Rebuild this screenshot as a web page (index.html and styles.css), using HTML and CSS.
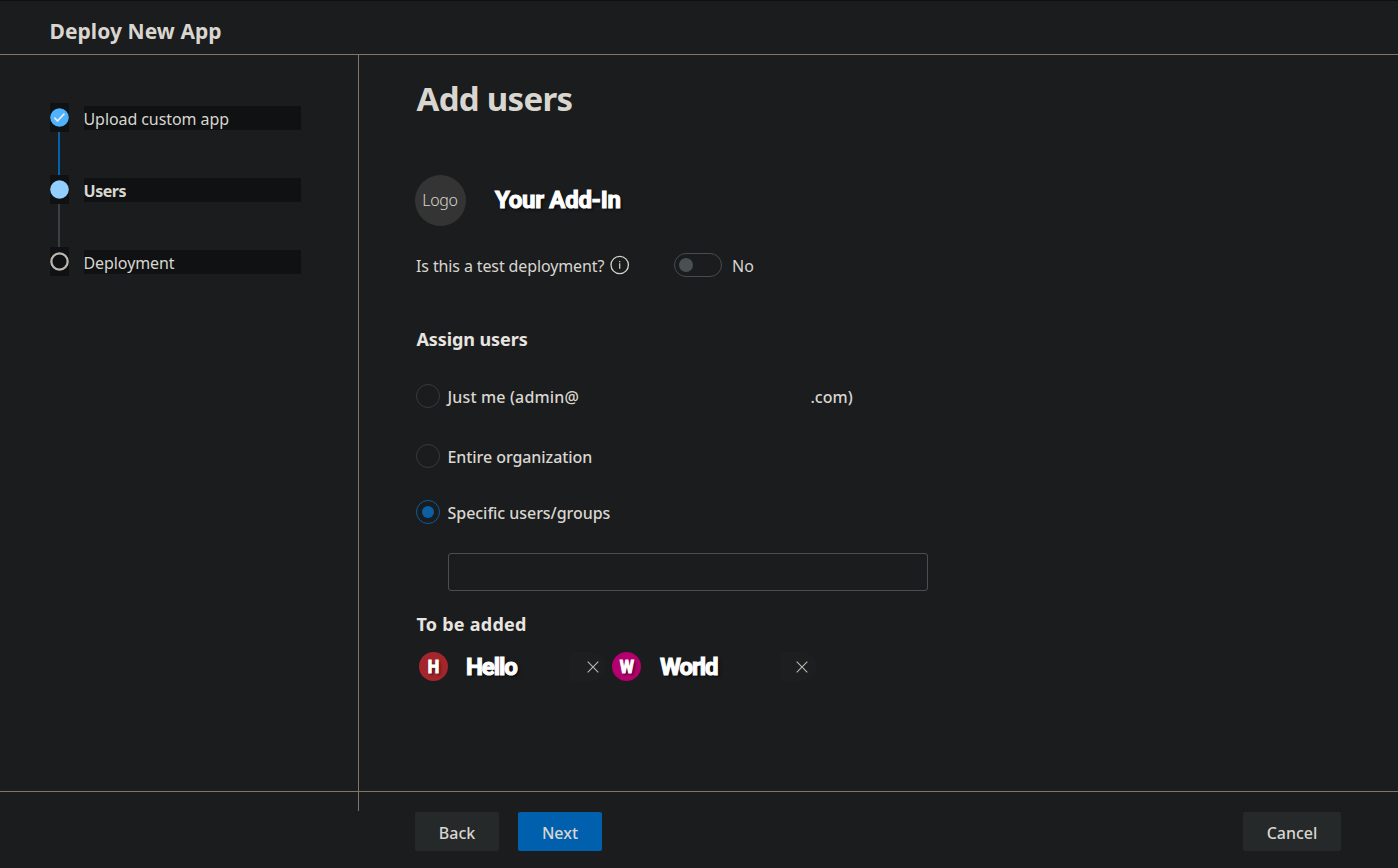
FILE: index.html
```html
<!DOCTYPE html>
<html lang="en">
<head>
<meta charset="utf-8">
<title>Deploy New App</title>
<link rel="stylesheet" href="styles.css">
</head>
<body>
<div class="app">
  <header class="header"><h1 class="header-title">Deploy New App</h1></header>
  <div class="body">
    <aside class="sidebar">
      <ol class="steps">
        <li class="step step-done">
          <span class="marker"><svg width="20" height="20" viewBox="0 0 20 20"><circle cx="10" cy="10" r="9.8" fill="#4db2ff"/><path d="M4.6 10.2l3.3 3.4 7.3-7.7" fill="none" stroke="#e5e5e0" stroke-width="1.9"/></svg></span>
          <span class="step-label upload">Upload custom app</span>
        </li>
        <li class="step step-current">
          <span class="marker"><svg width="20" height="20" viewBox="0 0 20 20"><circle cx="10" cy="10" r="9.8" fill="#92cfff"/></svg></span>
          <span class="step-label users">Users</span>
        </li>
        <li class="step step-next">
          <span class="marker"><svg width="20" height="20" viewBox="0 0 20 20"><circle cx="10" cy="10" r="8.6" fill="none" stroke="#bdb7af" stroke-width="2.4"/></svg></span>
          <span class="step-label deployment">Deployment</span>
        </li>
      </ol>
    </aside>
    <main class="main">
      <h2 class="title"><span>Add users</span></h2>
      <div class="addin">
        <span class="logo">Logo</span>
        <span class="display addin-name">Your Add-In</span>
      </div>
      <div class="test-row">
        <span class="question">Is this a test deployment?</span>
        <svg class="info" width="20" height="20" viewBox="0 0 20 20"><circle cx="9.7" cy="10" r="8.7" fill="none" stroke="#d6d3cd" stroke-width="1.3"/><path d="M9.7 8.2v5.6M9.7 5.9v1.3" stroke="#d6d3cd" stroke-width="1.2"/></svg>
        <span class="toggle"><span class="knob"></span></span>
        <span class="no">No</span>
      </div>
      <h3 class="section-title assign">Assign users</h3>
      <div class="option"><span class="radio"></span><span class="just">Just me (admin@</span><span class="domain">.com)</span></div>
      <div class="option entire-row"><span class="radio"></span><span class="entire">Entire organization</span></div>
      <div class="option specific-row"><span class="radio checked"></span><span class="specific">Specific users/groups</span></div>
      <div class="search"></div>
      <h3 class="section-title added">To be added</h3>
      <div class="people">
        <div class="person hello">
          <span class="avatar red"><span class="display initial">H</span></span>
          <span class="display name">Hello</span>
          <span class="remove"><svg width="12" height="12" viewBox="0 0 12 12"><path d="M.7.7l10.6 10.6M11.3.7L.7 11.3" stroke="#bcb8b1" stroke-width="1.1"/></svg></span>
        </div>
        <div class="person world">
          <span class="avatar magenta"><span class="display initial">W</span></span>
          <span class="display name">World</span>
          <span class="remove"><svg width="12" height="12" viewBox="0 0 12 12"><path d="M.7.7l10.6 10.6M11.3.7L.7 11.3" stroke="#bcb8b1" stroke-width="1.1"/></svg></span>
        </div>
      </div>
    </main>
  </div>
  <footer class="footer">
    <span class="button back">Back</span>
    <span class="button next">Next</span>
    <span class="button cancel">Cancel</span>
  </footer>
</div>
</body>
</html>
```
FILE: styles.css
```css
* { box-sizing: border-box; }
body { margin: 0; background: #1b1c1e; color: #d9d6d0; font: 16px/24px "Noto Sans", "Open Sans", sans-serif; }
h1, h2, h3, ol { margin: 0; padding: 0; }
svg { display: block; flex: none; }
span { white-space: nowrap; }
.app { width: 1398px; height: 868px; display: flex; flex-direction: column; overflow: hidden; }
.header { height: 55px; flex: none; border-top: 1px solid #0e0f10; border-bottom: 1px solid #80756a; padding: 16px 0 0 49.5px; }
.header-title { font-size: 21px; line-height: 29px; font-weight: 700; letter-spacing: .06px; }
.body { height: 736px; flex: none; display: flex; }
.sidebar { width: 359px; flex: none; border-right: 1px solid #80756a; padding: 48px 0 0 50px; }
.steps { list-style: none; }
.step { position: relative; display: flex; height: 72px; gap: 15px; }
.step::after { content: ""; position: absolute; left: 8px; top: 29px; width: 2px; height: 43px; background: #0063b1; }
.step-current::after { background: #3b4142; }
.step-next::after { display: none; }
.marker { width: 19px; height: 29px; background: #0f1113; padding-top: 5px; }
.marker svg { width: 19px; height: 19px; }
.step-label { width: 217px; height: 24px; margin-top: 3px; background: #0f1113; line-height: 26px; letter-spacing: -.08px; text-indent: -.5px; }
.users { font-weight: 700; letter-spacing: -.45px; }
.main { flex: 1; padding: 21px 0 0 57px; }
.title { font-size: 33px; line-height: 46px; height: 99px; font-weight: 700; letter-spacing: -.7px; text-indent: .5px; }
.addin { display: flex; align-items: flex-start; height: 52px; margin-left: -1px; }
.logo { width: 51px; height: 51px; border-radius: 50%; background: #343434; text-align: center; line-height: 50px; font-weight: 300; letter-spacing: -.3px; text-indent: -1px; }
.display { font-family: Roboto, sans-serif; font-weight: 700; color: #fff; -webkit-text-stroke: 1.1px #fff; text-shadow: 2px 2px 3px rgba(0,0,0,.6); }
.addin-name { font-size: 24px; line-height: 24px; margin: 13px 0 0 29px; letter-spacing: -.3px; }
.test-row { display: flex; align-items: center; height: 26px; margin-top: 25px; }
.question { width: 194px; margin-top: 2px; letter-spacing: -.12px; }
.toggle { width: 48px; height: 24px; border: 1px solid #464c4f; border-radius: 12px; margin-left: 44px; padding: 4px; }
.knob { display: block; width: 14px; height: 14px; border-radius: 50%; background: #485052; }
.no { margin: 2px 0 0 10px; }
.section-title { font-size: 18px; line-height: 25px; font-weight: 700; letter-spacing: -.08px; text-indent: .4px; color: #e8e5e0; }
.assign { margin-top: 49px; }
.option { display: flex; align-items: center; height: 24px; margin-top: 32px; font-weight: 500; }
.option span:not(.radio) { margin-top: 2px; }
.radio { width: 24px; height: 24px; border: 1px solid #373b3c; border-radius: 50%; margin-right: 7.5px; flex: none; }
.checked { border-color: #0b5c9f; padding: 5px; }
.checked::after { content: ""; display: block; width: 12px; height: 12px; border-radius: 50%; background: #0b5fa5; }
.just { width: 363px; letter-spacing: .15px; }
.entire { letter-spacing: -.07px; }
.specific { letter-spacing: -.04px; }
.entire-row { margin-top: 36px; }
.search { width: 480px; height: 38px; border: 1px solid #4b4e51; border-radius: 3px; margin: 29px 0 0 32px; }
.added { margin-top: 21px; letter-spacing: .25px; }
.people { display: flex; margin: 15px 0 0 3px; }
.person { display: flex; align-items: center; height: 29px; }
.avatar { width: 29px; height: 29px; border-radius: 50%; display: flex; align-items: center; justify-content: center; }
.red { background: #a4262c; }
.magenta { background: #b4006e; }
.initial { font-size: 18px; -webkit-text-stroke-width: 1.1px; transform: scaleX(.9); }
.name { font-size: 24px; margin-left: 18px; letter-spacing: -1.1px; }
.hello .name { width: 104px; }
.world .name { width: 122px; padding-left: 1px; }
.remove { width: 36px; height: 29px; border-radius: 0 14px 14px 0; background: #1d1e20; padding: 9px 0 0 16.5px; }
.world { margin-left: 6px; }
.world .remove { width: 35px; padding-left: 15px; }
.footer { position: relative; height: 77px; border-top: 1px solid #80756a; display: flex; padding: 20px 57px 0 415px; }
.footer::before { content: ""; position: absolute; left: 358px; top: 0; width: 1px; height: 19px; background: #80756a; }
.button { width: 84px; height: 39px; border-radius: 2px; background: #25292a; text-align: center; line-height: 42px; font-weight: 500; }
.next { margin-left: 19px; background: #0060ad; }
.cancel { width: 98px; margin-left: auto; }
```
